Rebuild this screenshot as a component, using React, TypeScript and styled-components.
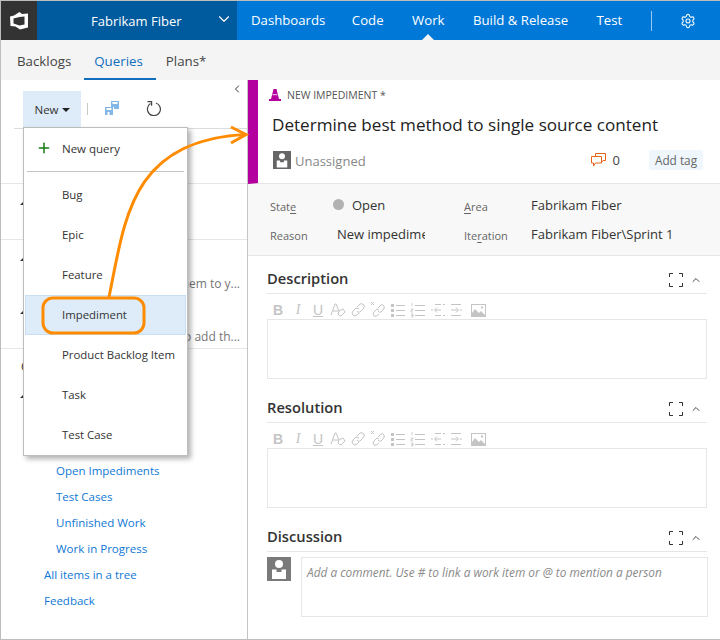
import React from "react";
import styled, { createGlobalStyle } from "styled-components";
import { Settings, ChevronDown, ChevronLeft, ChevronUp, Plus } from "lucide-react";

const Global = createGlobalStyle`
  html, body { margin: 0; padding: 0; background: #fff; }
  body { font-family: "Open Sans", "Noto Sans", sans-serif; color: #333; }
  * { box-sizing: border-box; }
`;

const Page = styled.div`
  position: relative;
  width: 720px;
  height: 640px;
  overflow: hidden;
  border-top: 1px solid #bdbdbd;
  border-left: 1px solid #bdbdbd;
  border-bottom: 1px solid #bdbdbd;
  display: flex;
  flex-direction: column;
  background: #fff;
`;

const TopBar = styled.header`
  height: 39px;
  display: flex;
  background: #0078d7;
  flex: none;
`;
const LogoBox = styled.div`
  width: 36px;
  background: #333;
  display: flex;
  align-items: center;
  justify-content: center;
`;
const Project = styled.div`
  width: 200px;
  background: #005a9e;
  color: #fff;
  display: flex;
  align-items: center;
  font-size: 13px;
  padding-left: 54px;
  position: relative;
`;
const ProjectChevron = styled.span`
  position: absolute;
  left: 178px;
  top: 9px;
  display: flex;
`;
const Nav = styled.nav`
  flex: 1;
  display: flex;
  align-items: center;
  padding-left: 14px;
  gap: 27.5px;
  position: relative;
`;
const NavItem = styled.span<{ $active?: boolean; $nudge?: number }>`
  color: #fff;
  font-size: 13.2px;
  line-height: 39px;
  position: relative;
  margin-left: ${(p) => p.$nudge ?? 0}px;
  &::after {
    content: "";
    display: ${(p) => (p.$active ? "block" : "none")};
    position: absolute;
    left: 50%;
    margin-left: -6px;
    bottom: 0;
    width: 0;
    height: 0;
    border-left: 6px solid transparent;
    border-right: 6px solid transparent;
    border-bottom: 6px solid #f4f4f4;
  }
`;
const NavDivider = styled.span`
  width: 1px;
  height: 20px;
  background: rgba(255, 255, 255, 0.6);
  margin-left: 1px;
`;
const NavGear = styled.span`
  display: flex;
  margin-left: 1px;
`;

const SubBar = styled.div`
  height: 40px;
  flex: none;
  background: #f4f4f4;
  display: flex;
  padding-left: 16px;
  gap: 23px;
`;
const SubTab = styled.span<{ $active?: boolean }>`
  font-size: 13.3px;
  line-height: 42px;
  color: ${(p) => (p.$active ? "#106ebe" : "#444")};
  position: relative;
  &::after {
    content: "";
    display: ${(p) => (p.$active ? "block" : "none")};
    position: absolute;
    left: -10px;
    right: -13px;
    bottom: 0;
    height: 2px;
    background: #106ebe;
  }
`;

const Body = styled.div`
  flex: 1;
  display: flex;
  min-height: 0;
`;

const LeftPane = styled.aside`
  width: 247px;
  flex: none;
  border-right: 1px solid #c4c4c4;
  display: flex;
  flex-direction: column;
  position: relative;
`;
const CollapseBtn = styled.span`
  position: absolute;
  right: 4px;
  top: 3px;
  display: flex;
  color: #333;
`;
const LeftToolbar = styled.div`
  height: 49px;
  flex: none;
  margin-left: 13px;
  padding: 11px 0 0 9px;
  border-bottom: 1px solid #dcdcdc;
  display: flex;
  align-items: flex-start;
`;
const NewBtn = styled.div`
  width: 58px;
  height: 37px;
  background: #deecf9;
  display: flex;
  align-items: center;
  justify-content: center;
  gap: 3px;
  font-size: 11.5px;
  color: #333;
`;
const Caret = styled.span`
  width: 0;
  height: 0;
  border-left: 4px solid transparent;
  border-right: 4px solid transparent;
  border-top: 4px solid #222;
`;
const ToolSep = styled.span`
  width: 1px;
  height: 12px;
  background: #c8c8c8;
  margin: 12px 17px 0 6px;
`;
const ToolIcon = styled.span<{ $gap?: number }>`
  display: flex;
  margin-top: 10px;
  margin-right: ${(p) => p.$gap ?? 0}px;
`;
const TreeSection = styled.section<{ $h: number }>`
  height: ${(p) => p.$h}px;
  flex: none;
  border-bottom: 1px solid #e6e6e6;
  overflow: hidden;
  padding-top: 6px;
`;
const TreeOpen = styled.section`
  flex: 1;
  overflow: hidden;
`;
const TreeRow = styled.div<{ $indent?: number; $h?: number }>`
  height: ${(p) => p.$h ?? 26}px;
  line-height: ${(p) => p.$h ?? 26}px;
  padding-left: ${(p) => p.$indent ?? 0}px;
  font-size: 12px;
  white-space: nowrap;
  overflow: hidden;
`;
const TreeCaret = styled.span`
  display: inline-block;
  margin-left: 19px;
  width: 0;
  height: 0;
  border-left: 3px solid transparent;
  border-right: 3px solid transparent;
  border-bottom: 3px solid #333;
  vertical-align: middle;
`;
const Hint = styled.div`
  width: 239px;
  margin-top: 3px;
  text-align: right;
  font-size: 12px;
  color: #767676;
  white-space: nowrap;
`;
const TreeLabel = styled.span`
  font-size: 12px;
  color: #333;
`;
const QueryLink = styled.a`
  color: #0f78d4;
  font-size: 11.5px;
  text-decoration: none;
`;

const Menu = styled.div`
  position: absolute;
  left: 22px;
  top: 126px;
  width: 165px;
  height: 329px;
  background: #fff;
  border: 1px solid #bdbdbd;
  box-shadow: 3px 3px 5px rgba(0, 0, 0, 0.3);
  padding: 1px;
  z-index: 2;
`;
const MenuNew = styled.div`
  height: 42px;
  display: flex;
  align-items: center;
  font-size: 11.5px;
  color: #333;
  padding: 0 0 4px 11px;
  gap: 10px;
`;
const MenuSep = styled.div`
  height: 1px;
  background: #c4c4c4;
  margin: 0 2px 3px;
`;
const MenuItem = styled.div<{ $active?: boolean }>`
  height: 40px;
  line-height: 38px;
  font-size: 11.4px;
  color: #333;
  padding-left: 36px;
  white-space: nowrap;
  background: ${(p) => (p.$active ? "#deecf9" : "transparent")};
  border: 1px solid ${(p) => (p.$active ? "#c7e0f4" : "transparent")};
`;

const Overlay = styled.svg`
  position: absolute;
  left: -1px;
  top: -1px;
  z-index: 3;
  pointer-events: none;
`;

const RightPane = styled.main`
  flex: 1;
  min-width: 0;
  display: flex;
  flex-direction: column;
`;
const ItemHeader = styled.div`
  height: 104px;
  flex: none;
  border-left: 10px solid #b4009e;
  border-bottom: 1px solid #e6e6e6;
  padding: 7px 0 0 11px;
  display: flex;
  flex-direction: column;
`;
const ItemType = styled.div`
  display: flex;
  align-items: center;
  gap: 6px;
  height: 16px;
  font-size: 10.5px;
  color: #555;
`;
const ItemTitle = styled.div`
  font-size: 17.1px;
  color: #222;
  margin: 10px 0 0 3px;
  line-height: 24px;
  white-space: nowrap;
`;
const ItemMeta = styled.div`
  display: flex;
  align-items: center;
  margin: 12px 17px 0 4px;
  height: 22px;
`;
const AvatarSmall = styled.span`
  width: 18px;
  height: 18px;
  background: #666;
  display: flex;
  flex: none;
`;
const Assigned = styled.span`
  font-size: 13px;
  color: #888;
  margin: 2px 0 0 4px;
  flex: 1;
`;
const CommentCount = styled.span`
  font-size: 13px;
  color: #444;
  margin: 0 29px 0 7px;
`;
const AddTag = styled.span`
  width: 54px;
  height: 20px;
  background: #eff6fc;
  color: #666;
  font-size: 11.8px;
  line-height: 20px;
  text-align: center;
`;

const Fields = styled.div`
  height: 72px;
  flex: none;
  background: #f8f8f8;
  border-bottom: 1px solid #e6e6e6;
  display: grid;
  grid-template-columns: 63px 131px 67px 1fr;
  grid-auto-rows: 29px;
  padding: 6px 0 0 22px;
  align-items: center;
  white-space: nowrap;
`;
const FieldLabel = styled.span`
  font-size: 11px;
  color: #666;
  padding-top: 3px;
  u { text-decoration-thickness: 1px; text-underline-offset: 2px; }
`;
const FieldValue = styled.span<{ $clip?: number; $inset?: number }>`
  font-size: 13px;
  color: #333;
  display: flex;
  align-items: center;
  gap: 8px;
  overflow: hidden;
  padding-left: ${(p) => p.$inset ?? 0}px;
  ${(p) => (p.$clip ? `width: ${p.$clip}px;` : "")}
`;
const Dot = styled.span`
  width: 11px;
  height: 11px;
  border-radius: 50%;
  background: #b2b2b2;
  flex: none;
`;

const Sections = styled.div`
  padding: 12px 13px 0 19px;
  display: flex;
  flex-direction: column;
`;
const SectionHead = styled.div`
  height: 26px;
  display: flex;
  align-items: center;
  justify-content: space-between;
  border-bottom: 1px solid #e6e6e6;
  padding: 0 5px 2px 0;
`;
const SectionTitle = styled.h3`
  margin: 0 0 4px;
  font-size: 14.7px;
  font-weight: 600;
  color: #333;
`;
const SectionTools = styled.span`
  display: flex;
  align-items: center;
  gap: 7px;
`;
const EditorTools = styled.div`
  height: 25px;
  display: flex;
  align-items: flex-end;
  padding: 0 0 1px 1px;
`;
const ToolBtn = styled.span`
  width: 20px;
  height: 16px;
  display: flex;
  align-items: center;
  justify-content: center;
  color: #c4c4c4;
  font-size: 14px;
`;
const BoldBtn = styled(ToolBtn)`
  font-weight: 700;
  font-family: "Liberation Sans", sans-serif;
`;
const ItalicBtn = styled(ToolBtn)`
  font-style: italic;
  font-family: "Liberation Serif", serif;
`;
const UnderBtn = styled(ToolBtn)`
  text-decoration: underline;
  font-family: "Liberation Sans", sans-serif;
`;
const EditBox = styled.div`
  height: 60px;
  border: 1px solid #e6e6e6;
  margin-bottom: 18px;
`;
const DiscussRow = styled.div`
  display: flex;
  gap: 10px;
  margin-top: 5px;
`;
const AvatarLarge = styled.span`
  width: 24px;
  height: 24px;
  background: #7a7a7a;
  display: flex;
  flex: none;
`;
const CommentBox = styled.div`
  flex: 1;
  height: 60px;
  margin-right: -1px;
  border: 1px solid #e6e6e6;
  padding: 6px 5px;
  font-size: 11.85px;
  font-style: italic;
  color: #8a8a8a;
  white-space: nowrap;
`;

const s = { fill: "none", stroke: "#c4c4c4", strokeWidth: 1 } as const;

const EditorBar = () => (
  <EditorTools>
    <BoldBtn>B</BoldBtn>
    <ItalicBtn>I</ItalicBtn>
    <UnderBtn>U</UnderBtn>
    <ToolBtn>
      <svg width="16" height="16" viewBox="0 0 16 16" {...s}>
        <path d="M1 13 L5 2 L6 2 L9 9 M3 9 H8" />
        <path d="M9 9 L13 7 L15 10 L11 14 Q9 14 8 12 Z" />
      </svg>
    </ToolBtn>
    <ToolBtn>
      <svg width="16" height="16" viewBox="0 0 16 16" {...s}>
        <path d="M7 5 L10 2 Q12 1 14 3 Q15 5 13 7 L10 10 Q8 11 7 9" />
        <path d="M9 7 L6 6 L3 9 Q1 11 3 13 Q5 15 7 13 L9 11" />
      </svg>
    </ToolBtn>
    <ToolBtn>
      <svg width="16" height="16" viewBox="0 0 16 16" {...s}>
        <path d="M1 0 L4 3 M4 0 L1 3" />
        <path d="M8 6 L11 3 Q13 2 14 4 Q15 6 13 8 L11 10 Q9 11 8 9" />
        <path d="M9 8 L7 7 L4 10 Q2 12 4 14 Q6 15 8 13 L9 12" />
      </svg>
    </ToolBtn>
    <ToolBtn>
      <svg width="16" height="16" viewBox="0 0 16 16">
        <rect x="1" y="2" width="3" height="3" fill="#c4c4c4" />
        <rect x="1" y="7" width="3" height="3" fill="#c4c4c4" />
        <rect x="1" y="12" width="3" height="3" fill="#c4c4c4" />
        <path d="M6 3.5H15M6 8.5H15M6 13.5H15" stroke="#c4c4c4" />
      </svg>
    </ToolBtn>
    <ToolBtn>
      <svg width="16" height="16" viewBox="0 0 16 16">
        <path d="M2 1V4M1 7H3V8H1V10H3M1 12H3V15H1M1 13.5H3" stroke="#c4c4c4" fill="none" strokeWidth={0.8} />
        <path d="M5 3.5H15M5 8.5H15M5 13.5H15" stroke="#c4c4c4" />
      </svg>
    </ToolBtn>
    <ToolBtn>
      <svg width="16" height="16" viewBox="0 0 16 16" {...s}>
        <path d="M5 2.5H11M13 2.5H15M1 8H3M5 8H11M5 13.5H11M13 13.5H15" />
        <path d="M7 5.5 L4.5 8 L7 10.5" />
      </svg>
    </ToolBtn>
    <ToolBtn>
      <svg width="16" height="16" viewBox="0 0 16 16" {...s}>
        <path d="M1 2.5H11M1 8H8M10 8H12M1 13.5H11" />
        <path d="M6 5.5 L8.5 8 L6 10.5" />
      </svg>
    </ToolBtn>
    <ToolBtn>
      <svg width="15" height="13" viewBox="0 0 15 13">
        <rect x="0.5" y="0.5" width="14" height="12" fill="#fff" stroke="#c4c4c4" />
        <path d="M1 12 V9 L4 5 L8 9 L10 7 L14 11 V12 Z" fill="#c4c4c4" />
        <rect x="10" y="2.5" width="2" height="2" fill="#c4c4c4" />
      </svg>
    </ToolBtn>
  </EditorTools>
);

const FullIcon = () => (
  <svg width="14" height="14" viewBox="0 0 14 14" fill="none" stroke="#333" strokeWidth={1}>
    <path d="M0.5 4V0.5H4M10 0.5H13.5V4M13.5 10V13.5H10M4 13.5H0.5V10" />
  </svg>
);

const SectionHeader = ({ title }: { title: string }) => (
  <SectionHead>
    <SectionTitle>{title}</SectionTitle>
    <SectionTools>
      <FullIcon />
      <ChevronUp size={12} color="#333" strokeWidth={1.8} />
    </SectionTools>
  </SectionHead>
);

const Person = ({ size }: { size: number }) => (
  <svg width={size} height={size} viewBox="0 0 24 24">
    <circle cx="12" cy="7" r="4" fill="#fff" />
    <path d="M5 12.5 H9.5 V15 H14.5 V12.5 H19 V22 H5 Z" fill="#fff" />
  </svg>
);

const queries = ["Open Impediments", "Test Cases", "Unfinished Work", "Work in Progress"];
const types = ["Bug", "Epic", "Feature", "Impediment", "Product Backlog Item", "Task", "Test Case"];

export default function App() {
  return (
    <Page>
      <Global />
      <TopBar>
        <LogoBox>
          <svg width="18" height="18" viewBox="0 0 18 18">
            <path
              fillRule="evenodd"
              fill="#fff"
              d="M0 4.5 L4 3.5 L9.5 0 L12 2 L18 1.5 V15.5 L10 17.5 L5.5 14.5 L0.5 14 Z M3.5 6.5 L3.5 11.5 L9.5 13.5 L14.5 12.5 V4.5 L9.5 5 Z"
            />
          </svg>
        </LogoBox>
        <Project>
          Fabrikam Fiber
          <ProjectChevron>
            <ChevronDown size={18} color="#fff" strokeWidth={1.5} />
          </ProjectChevron>
        </Project>
        <Nav>
          <NavItem>Dashboards</NavItem>
          <NavItem $nudge={-1}>Code</NavItem>
          <NavItem $nudge={1} $active>
            Work
          </NavItem>
          <NavItem $nudge={1}>Build &amp; Release</NavItem>
          <NavItem $nudge={1}>Test</NavItem>
          <NavDivider />
          <NavGear>
            <Settings size={16} color="#fff" strokeWidth={1.6} />
          </NavGear>
        </Nav>
      </TopBar>
      <SubBar>
        <SubTab>Backlogs</SubTab>
        <SubTab $active>Queries</SubTab>
        <SubTab>Plans*</SubTab>
      </SubBar>
      <Body>
        <LeftPane>
          <CollapseBtn>
            <ChevronLeft size={12} strokeWidth={2} />
          </CollapseBtn>
          <LeftToolbar>
            <NewBtn>
              New <Caret />
            </NewBtn>
            <ToolSep />
            <ToolIcon $gap={27}>
              <svg width="14" height="14" viewBox="0 0 14 14">
                <path fill="#85b7e6" d="M6 0 H14 V8 H9 V6 H6 Z" />
                <path fill="#85b7e6" d="M0 6 H8 V14 H0 Z" />
                <rect x="1.5" y="7" width="5" height="2" fill="#fff" />
                <rect x="7.5" y="1" width="5" height="2" fill="#fff" />
                <rect x="2.5" y="11" width="2" height="3" fill="#fff" />
              </svg>
            </ToolIcon>
            <ToolIcon>
              <svg width="15" height="15" viewBox="0 0 15 15" fill="none" stroke="#444" strokeWidth={1.2}>
                <path d="M4.5 2.6 A6.5 6.5 0 1 0 10 2" />
                <path d="M1.5 0.6 H5.6 V4.8" />
              </svg>
            </ToolIcon>
          </LeftToolbar>
          <TreeSection $h={55} />
          <TreeSection $h={56}>
            <TreeRow $h={26}>
              <TreeCaret />
            </TreeRow>
          </TreeSection>
          <TreeSection $h={109}>
            <TreeRow>
              <TreeCaret />
            </TreeRow>
            <Hint>Drag queries here to add them to y...</Hint>
            <TreeRow $h={7} />
            <TreeRow>
              <TreeCaret />
            </TreeRow>
            <Hint>Drag folders here to add th...</Hint>
          </TreeSection>
          <TreeOpen>
            <TreeRow $indent={20} $h={36}>
              <TreeLabel>C</TreeLabel>
            </TreeRow>
            <TreeRow $h={22}>
              <TreeCaret />
            </TreeRow>
            <TreeRow $h={51} />
            {queries.map((q) => (
              <TreeRow key={q} $indent={55}>
                <QueryLink>{q}</QueryLink>
              </TreeRow>
            ))}
            <TreeRow $indent={43}>
              <QueryLink>All items in a tree</QueryLink>
            </TreeRow>
            <TreeRow $indent={43}>
              <QueryLink>Feedback</QueryLink>
            </TreeRow>
          </TreeOpen>
        </LeftPane>
        <RightPane>
          <ItemHeader>
            <ItemType>
              <svg width="12" height="12" viewBox="0 0 12 12">
                <path fill="#b4009e" d="M4.5 0 H7.5 L10 10 H12 V12 H0 V10 H2 Z" />
                <path fill="#e9a6e0" d="M3.6 5 H8.4 V6.2 H3.4 Z" />
              </svg>
              NEW IMPEDIMENT *
            </ItemType>
            <ItemTitle>Determine best method to single source content</ItemTitle>
            <ItemMeta>
              <AvatarSmall>
                <Person size={18} />
              </AvatarSmall>
              <Assigned>Unassigned</Assigned>
              <svg width="15" height="14" viewBox="0 0 15 14" fill="none" stroke="#e8641b" strokeWidth={1}>
                <path d="M4.5 3 V0.5 H14.5 V7.5 H12 L11 9" />
                <path d="M0.5 3.5 H10.5 V10 H4.5 L2.5 13 V10 H0.5 Z" />
              </svg>
              <CommentCount>0</CommentCount>
              <AddTag>Add tag</AddTag>
            </ItemMeta>
          </ItemHeader>
          <Fields>
            <FieldLabel>
              Stat<u>e</u>
            </FieldLabel>
            <FieldValue>
              <Dot />
              Open
            </FieldValue>
            <FieldLabel>
              <u>A</u>rea
            </FieldLabel>
            <FieldValue>Fabrikam Fiber</FieldValue>
            <FieldLabel>Reason</FieldLabel>
            <FieldValue $clip={92} $inset={4}>
              New impediment
            </FieldValue>
            <FieldLabel>
              Ite<u>r</u>ation
            </FieldLabel>
            <FieldValue>Fabrikam Fiber\Sprint 1</FieldValue>
          </Fields>
          <Sections>
            <SectionHeader title="Description" />
            <EditorBar />
            <EditBox />
            <SectionHeader title="Resolution" />
            <EditorBar />
            <EditBox />
            <SectionHeader title="Discussion" />
            <DiscussRow>
              <AvatarLarge>
                <Person size={24} />
              </AvatarLarge>
              <CommentBox>Add a comment. Use # to link a work item or @ to mention a person</CommentBox>
            </DiscussRow>
          </Sections>
        </RightPane>
      </Body>
      <Menu>
        <MenuNew>
          <Plus size={16} color="#107c10" strokeWidth={2.2} />
          New query
        </MenuNew>
        <MenuSep />
        {types.map((t) => (
          <MenuItem key={t} $active={t === "Impediment"}>
            {t}
          </MenuItem>
        ))}
      </Menu>
      <Overlay width="720" height="640" viewBox="0 0 720 640" fill="none" stroke="#ff8c00">
        <rect x="43" y="298" width="101" height="35" rx="10" strokeWidth={3} />
        <path d="M109 297 C125 220 130 140 246 134.5" strokeWidth={3} />
        <path d="M231 127 L246 134.5 L231 143" strokeWidth={3} />
      </Overlay>
    </Page>
  );
}
